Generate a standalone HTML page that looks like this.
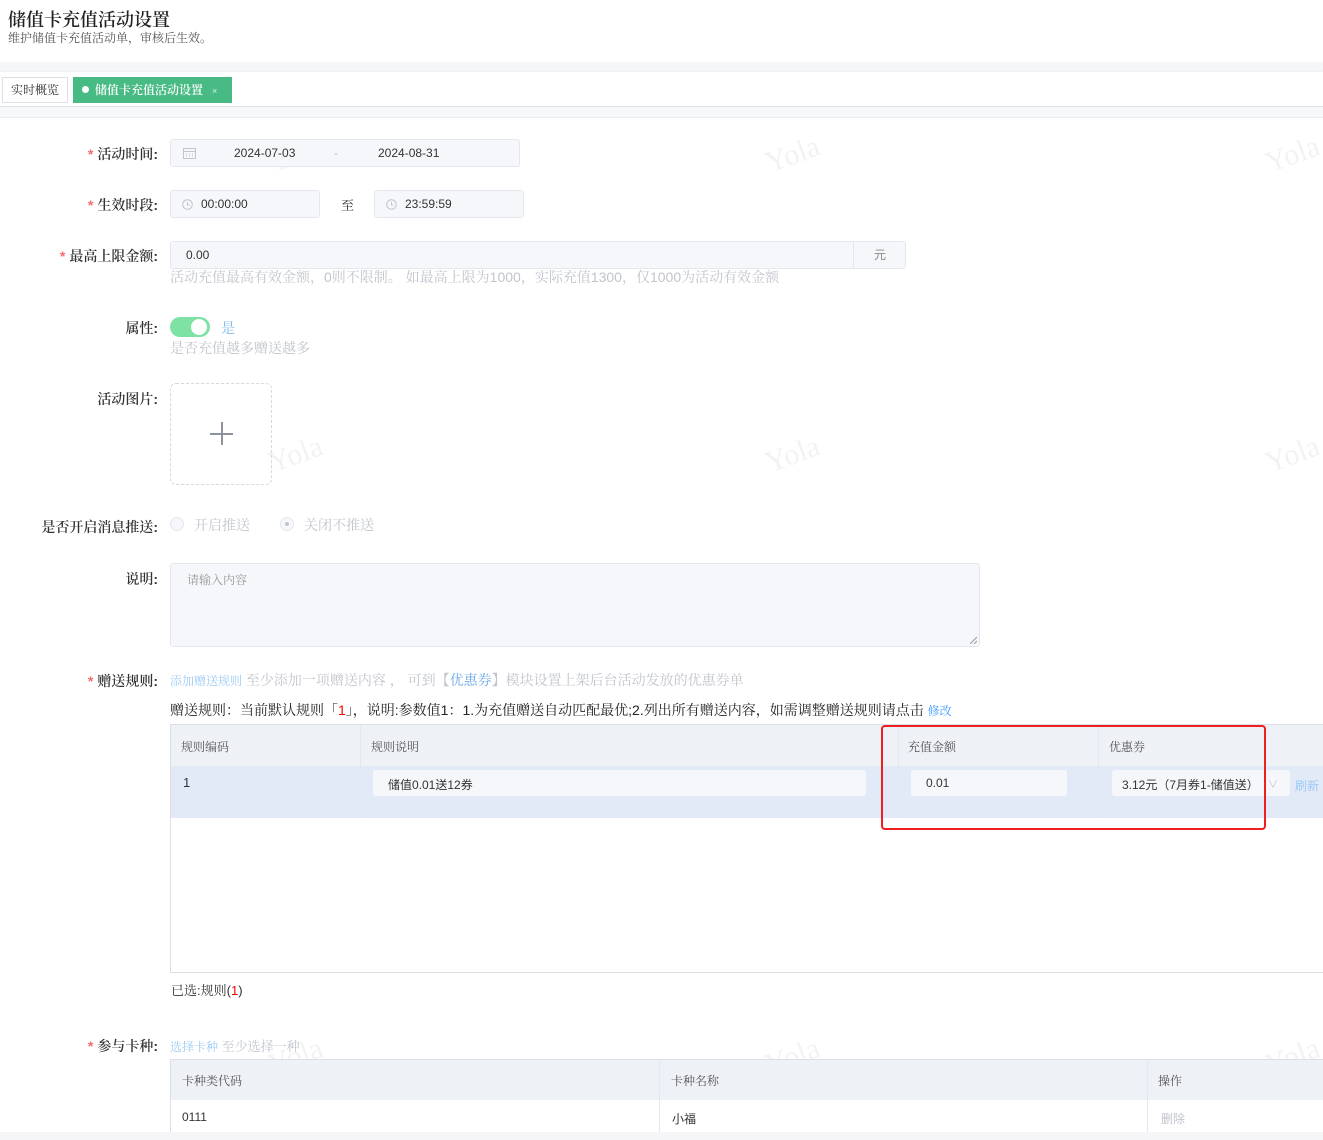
<!DOCTYPE html>
<html><head><meta charset="utf-8">
<style>
*{box-sizing:border-box;margin:0;padding:0}
body{width:1323px;height:1140px;position:relative;overflow:hidden;background:#fff;font-family:"Liberation Sans","Noto Sans CJK SC",sans-serif;font-size:12px;color:#333}
.a{position:absolute}
.serif{font-family:"Liberation Sans","Noto Serif CJK SC",serif}
.lbl{position:absolute;right:1165px;font-family:"Liberation Sans","Noto Serif CJK SC",serif;font-size:14px;color:#333;white-space:nowrap;font-weight:600}
.lbl i{color:#f56c6c;font-style:normal;margin-right:4px}
.inp{position:absolute;background:#f5f7fa;border:1px solid #e4e7ed;border-radius:3px;height:28px}
.hint{position:absolute;font-family:"Liberation Sans","Noto Serif CJK SC",serif;font-size:14px;color:#c0c4cc;white-space:nowrap}
.wm{position:absolute;font-family:"Liberation Serif",serif;font-size:30px;color:rgba(0,0,0,0.05);transform:rotate(-20deg)}
.th{position:absolute;font-size:12px;color:#555}
.vl{position:absolute;width:1px;background:#e4e7ed}
</style></head><body>
<div class="a serif" style="left:8px;top:6px;font-size:18px;color:#222;font-weight:600">储值卡充值活动设置</div>
<div class="a serif" style="left:8px;top:29px;font-size:12px;color:#555">维护储值卡充值活动单，审核后生效。</div>
<div class="a" style="left:0;top:62px;width:1323px;height:10px;background:#f5f6f8"></div>
<div class="a" style="left:0;top:72px;width:1323px;height:34px;background:#fff;box-shadow:0 1px 3px rgba(0,0,0,.12)"></div>
<div class="a" style="left:0;top:106px;width:1323px;height:12px;background:#f7f8fa;border-top:1px solid #dfe2e8;border-bottom:1px solid #eceef2"></div>
<div class="a serif" style="left:2px;top:77px;width:66px;height:26px;border:1px solid #dcdfe6;line-height:24px;text-align:center;font-size:12px;color:#333">实时概览</div>
<div class="a serif" style="left:73px;top:77px;width:159px;height:26px;background:#48bb84;line-height:26px;color:#fff;font-size:12px;padding-left:9px;font-weight:600">
<span style="display:inline-block;width:7px;height:7px;border-radius:50%;background:#fff;margin-right:6px;vertical-align:1px"></span>储值卡充值活动设置<span style="margin-left:9px;font-size:9px;opacity:.8;font-weight:normal">×</span></div>

<div class="wm" style="left:268px;top:138px">Yola</div><div class="wm" style="left:765px;top:138px">Yola</div><div class="wm" style="left:1265px;top:138px">Yola</div>
<div class="wm" style="left:268px;top:438px">Yola</div><div class="wm" style="left:765px;top:438px">Yola</div><div class="wm" style="left:1265px;top:438px">Yola</div>
<div class="wm" style="left:268px;top:738px">Yola</div><div class="wm" style="left:765px;top:738px">Yola</div><div class="wm" style="left:1265px;top:738px">Yola</div>
<div class="wm" style="left:268px;top:1040px">Yola</div><div class="wm" style="left:765px;top:1040px">Yola</div><div class="wm" style="left:1265px;top:1040px">Yola</div>

<div class="lbl" style="top:144px"><i>*</i>活动时间:</div>
<div class="inp" style="left:170px;top:139px;width:350px">
<svg class="a" style="left:12px;top:7px" width="13" height="12" viewBox="0 0 13 12"><rect x="0.5" y="1.5" width="12" height="10" fill="none" stroke="#c0c4cc"/><line x1="0.5" y1="4.5" x2="12.5" y2="4.5" stroke="#c0c4cc"/><path d="M3 7h1M6 7h1M9 7h1M3 9h1M6 9h1M9 9h1" stroke="#c0c4cc"/></svg>
<span class="a" style="left:63px;top:6px;color:#333">2024-07-03</span><span class="a" style="left:163px;top:6px;color:#bbb">-</span><span class="a" style="left:207px;top:6px;color:#333">2024-08-31</span></div>
<div class="lbl" style="top:195px"><i>*</i>生效时段:</div>
<div class="inp" style="left:170px;top:190px;width:150px"><svg class="a" style="left:11px;top:8px" width="11" height="11" viewBox="0 0 11 11"><circle cx="5.5" cy="5.5" r="4.8" fill="none" stroke="#c0c4cc"/><path d="M5.5 3v3h2" fill="none" stroke="#c0c4cc"/></svg><span class="a" style="left:30px;top:6px">00:00:00</span></div>
<div class="a serif" style="left:341px;top:195px;font-size:13px">至</div>
<div class="inp" style="left:374px;top:190px;width:150px"><svg class="a" style="left:11px;top:8px" width="11" height="11" viewBox="0 0 11 11"><circle cx="5.5" cy="5.5" r="4.8" fill="none" stroke="#c0c4cc"/><path d="M5.5 3v3h2" fill="none" stroke="#c0c4cc"/></svg><span class="a" style="left:30px;top:6px">23:59:59</span></div>
<div class="lbl" style="top:246px"><i>*</i>最高上限金额:</div>
<div class="inp" style="left:170px;top:241px;width:736px"><span class="a" style="left:15px;top:6px">0.00</span><div class="a" style="left:682px;top:-1px;width:53px;height:28px;border-left:1px solid #e4e7ed;text-align:center;line-height:28px;color:#888">元</div></div>
<div class="hint" style="left:170px;top:267px">活动充值最高有效金额，0则不限制。 如最高上限为1000，实际充值1300，仅1000为活动有效金额</div>
<div class="lbl" style="top:318px">属性:</div>
<div class="a" style="left:170px;top:317px;width:40px;height:20px;border-radius:10px;background:#7ee2a4"><div class="a" style="left:21px;top:2px;width:16px;height:16px;border-radius:50%;background:#fff"></div></div>
<div class="a serif" style="left:221px;top:318px;font-size:14px;color:#7fb8f0">是</div>
<div class="hint" style="left:170px;top:338px">是否充值越多赠送越多</div>
<div class="lbl" style="top:389px">活动图片:</div>
<div class="a" style="left:170px;top:383px;width:102px;height:102px;border:1px dashed #d9d9d9;border-radius:6px"><div class="a" style="left:39px;top:49px;width:23px;height:1.5px;background:#8c939d"></div><div class="a" style="left:50px;top:38px;width:1.5px;height:23px;background:#8c939d"></div></div>
<div class="lbl" style="top:517px">是否开启消息推送:</div>
<div class="a" style="left:170px;top:517px;width:14px;height:14px;border-radius:50%;border:1px solid #e4e7ed;background:#f5f7fa"></div>
<div class="hint" style="left:194px;top:515px">开启推送</div>
<div class="a" style="left:280px;top:517px;width:14px;height:14px;border-radius:50%;border:1px solid #e4e7ed;background:#f5f7fa"><div class="a" style="left:4px;top:4px;width:4px;height:4px;border-radius:50%;background:#c0c4cc"></div></div>
<div class="hint" style="left:304px;top:515px">关闭不推送</div>
<div class="lbl" style="top:569px">说明:</div>
<div class="inp" style="left:170px;top:563px;width:810px;height:84px"><span class="a serif" style="left:16px;top:7px;color:#999">请输入内容</span>
<svg class="a" style="right:2px;bottom:2px" width="7" height="7"><path d="M7 0L0 7M7 4L4 7" stroke="#999"/></svg></div>
<div class="lbl" style="top:671px"><i>*</i>赠送规则:</div>
<div class="hint" style="left:170px;top:670px;font-size:14px"><span style="color:#9ccaf5;font-size:12px">添加赠送规则</span> 至少添加一项赠送内容 ， 可到【<span style="color:#6aa9e8">优惠券</span>】模块设置上架后台活动发放的优惠券单</div>
<div class="a serif" style="left:170px;top:700px;font-size:14px;color:#222;white-space:nowrap">赠送规则：当前默认规则「<span style="color:#f00">1</span>」，说明:参数值1：1.为充值赠送自动匹配最优;2.列出所有赠送内容，如需调整赠送规则请点击 <span style="color:#409eff;font-size:12px">修改</span></div>
<div class="a" style="left:170px;top:724px;width:1160px;height:249px;border:1px solid #dcdfe6;border-right:none"></div>
<div class="a" style="left:171px;top:725px;width:1152px;height:41px;background:#eef1f6"></div>
<div class="a" style="left:171px;top:766px;width:1152px;height:52px;background:#e3eaf7"></div>
<div class="vl" style="left:360px;top:725px;height:93px"></div><div class="vl" style="left:898px;top:725px;height:93px"></div><div class="vl" style="left:1098px;top:725px;height:93px"></div>
<div class="th serif" style="left:181px;top:738px">规则编码</div><div class="th serif" style="left:371px;top:738px">规则说明</div><div class="th serif" style="left:908px;top:738px">充值金额</div><div class="th serif" style="left:1109px;top:738px">优惠券</div>
<div class="a" style="left:183px;top:775px;font-size:13px">1</div>
<div class="a" style="left:373px;top:770px;width:493px;height:26px;background:#f5f7fa;border-radius:3px;padding:6px 15px" >储值0.01送12券</div>
<div class="a" style="left:911px;top:770px;width:156px;height:26px;background:#f5f7fa;border-radius:3px;padding:6px 15px">0.01</div>
<div class="a" style="left:1112px;top:770px;width:178px;height:26px;background:#f5f7fa;border-radius:3px;padding:6px 0 0 10px;white-space:nowrap;overflow:hidden">3.12元（7月券1-储值送）<span class="a" style="left:156px;top:6px;color:#c0c4cc;font-size:10px">∨</span></div>
<div class="a" style="left:1295px;top:777px;color:#9ccaf5">刷新</div>
<div class="a" style="left:881px;top:725px;width:385px;height:105px;border:2px solid #f01f1f;border-radius:4px"></div>
<div class="a serif" style="left:171px;top:980px;font-size:13px">已选:规则(<span style="color:#f00">1</span>)</div>
<div class="lbl" style="top:1036px"><i>*</i>参与卡种:</div>
<div class="hint" style="left:170px;top:1036px;font-size:13px"><span style="color:#9ccaf5;font-size:12px">选择卡种</span> 至少选择一种</div>
<div class="a" style="left:170px;top:1059px;width:1160px;height:80px;border:1px solid #dcdfe6;border-right:none"></div>
<div class="a" style="left:171px;top:1060px;width:1152px;height:40px;background:#eef1f6"></div>
<div class="vl" style="left:659px;top:1060px;height:80px"></div><div class="vl" style="left:1147px;top:1060px;height:80px"></div>
<div class="th serif" style="left:182px;top:1072px">卡种类代码</div><div class="th serif" style="left:671px;top:1072px">卡种名称</div><div class="th serif" style="left:1158px;top:1072px">操作</div>
<div class="a" style="left:182px;top:1110px">0111</div><div class="a" style="left:672px;top:1110px">小福</div><div class="a" style="left:1161px;top:1110px;color:#c0c4cc">删除</div>
<div class="a" style="left:0;top:1132px;width:1323px;height:8px;background:#f5f6f8"></div>
</body></html>
